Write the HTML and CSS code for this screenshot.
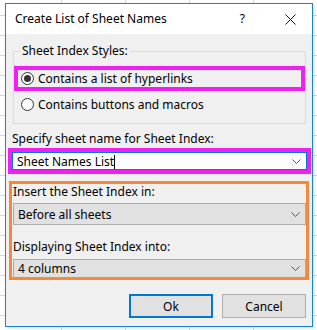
FILE: index.html
```html
<!DOCTYPE html>
<html lang="en">
  <head>
    <meta charset="UTF-8" />
    <meta name="viewport" content="width=device-width, initial-scale=1.0" />
    <title>Create List of Sheet Names</title>
    <link rel="stylesheet" href="styles.css">
  </head>
  <body>
    <div class="dialog">
      <div class="titlebar">
        <span class="title">Create List of Sheet Names</span>
        <span class="help">?</span>
        <svg class="close" width="11" height="11" viewBox="0 0 11 11">
          <path d="M0.5 0.5 L10.5 10.5 M10.5 0.5 L0.5 10.5" stroke="#111" stroke-width="1" fill="none" />
        </svg>
      </div>

      <div class="content">
        <fieldset class="group">
          <legend>Sheet Index Styles:</legend>
          <div class="radio-row mark-pink first">
            <span class="radio checked"></span>
            <span>Contains a list of hyperlinks</span>
          </div>
          <div class="radio-row second">
            <span class="radio"></span>
            <span>Contains buttons and macros</span>
          </div>
        </fieldset>

        <div class="field-label spec">Specify sheet name for Sheet Index:</div>
        <div class="mark-pink name-box">
          <div class="combo editable">
            <span class="value">Sheet Names List<span class="caret"></span></span>
            <svg class="chevron" width="9" height="5" viewBox="0 0 9 5">
              <path d="M0.5 0.5 L4.5 4.5 L8.5 0.5" stroke="#555" fill="none" />
            </svg>
          </div>
        </div>

        <div class="mark-orange">
          <div class="field-label">Insert the Sheet Index in:</div>
          <div class="combo">
            <span class="value">Before all sheets</span>
            <svg class="chevron" width="9" height="5" viewBox="0 0 9 5">
              <path d="M0.5 0.5 L4.5 4.5 L8.5 0.5" stroke="#555" fill="none" />
            </svg>
          </div>
          <div class="field-label second-label">Displaying Sheet Index into:</div>
          <div class="combo last">
            <span class="value">4 columns</span>
            <svg class="chevron" width="9" height="5" viewBox="0 0 9 5">
              <path d="M0.5 0.5 L4.5 4.5 L8.5 0.5" stroke="#555" fill="none" />
            </svg>
          </div>
        </div>

        <div class="buttons">
          <button class="btn default">Ok</button>
          <button class="btn">Cancel</button>
        </div>
      </div>
    </div>
  </body>
</html>
```

FILE: styles.css
```css
html, body {
  margin: 0;
  width: 317px;
  height: 330px;
  overflow: hidden;
}
body {
  font-family: "Noto Sans", "Open Sans", sans-serif;
  font-size: 12px;
  color: #000;
  background-color: #fff;
  background-image:
    linear-gradient(to right, #d8d8d8 1px, transparent 1px),
    linear-gradient(to bottom, #d8d8d8 1px, transparent 1px);
  background-size: 64px 100%, 100% 20px;
  background-position: 61px 0, 0 15px;
}
.dialog {
  box-sizing: border-box;
  margin: 3px 0 0 5px;
  width: 308px;
  height: 324px;
  border: 1px solid #1883d7;
  background: #f0f0f0;
  display: flex;
  flex-direction: column;
  box-shadow: 1px 1px 3px rgba(0, 0, 0, 0.15);
}
.titlebar {
  height: 30px;
  background: #fff;
  display: flex;
  align-items: center;
  padding-left: 9px;
}
.title {
  flex: 1;
  line-height: 16px;
}
.help {
  margin-right: 40px;
  line-height: 16px;
}
.close {
  margin-right: 16px;
}
.content {
  flex: 1;
  display: flex;
  flex-direction: column;
}
.group {
  margin: 9px 6px 0 7px;
  padding: 0 0 9px 0;
  border: 1px solid #dcdcdc;
  min-width: 0;
}
.group legend {
  margin-left: 6px;
  padding: 0 2px;
  line-height: 16px;
}
.radio-row {
  display: flex;
  align-items: center;
  gap: 4px;
}
.radio-row.first {
  margin-top: 7px;
  height: 17px;
  padding-left: 3px;
}
.radio-row.second {
  margin-top: 3px;
  height: 20px;
  padding-left: 7px;
}
.mark-pink {
  border: 4px solid #f020f0;
}
.mark-orange {
  border: 3px solid #f5883a;
}
.radio {
  box-sizing: border-box;
  width: 13px;
  height: 13px;
  border: 1px solid #333;
  border-radius: 50%;
  background: #fff;
  display: flex;
  align-items: center;
  justify-content: center;
}
.radio.checked::after {
  content: "";
  width: 7px;
  height: 7px;
  border-radius: 50%;
  background: #333;
}
.field-label {
  line-height: 16px;
}
.spec {
  margin: 7px 0 0 6px;
}
.name-box {
  margin: 1px 1px 0 2px;
  height: 18px;
  padding: 0;
}
.combo {
  box-sizing: border-box;
  height: 22px;
  border: 1px solid #adadad;
  background: #e1e1e1;
  display: flex;
  align-items: center;
  padding: 0 5px 0 4px;
}
.combo .value {
  flex: 1;
}
.combo.editable {
  height: 18px;
  margin-left: 0;
  border-color: #0078d7;
  background: #fff;
}
.caret {
  display: inline-block;
  width: 1px;
  height: 14px;
  background: #000;
  vertical-align: -3px;
}
.mark-orange {
  margin: 7px 3px 0 3px;
  padding: 0 0 0 1px;
}
.mark-orange .field-label {
  margin-top: 0;
}
.mark-orange .combo {
  margin-top: 3px;
}
.mark-orange .second-label {
  margin-top: 14px;
}
.mark-orange .combo.last {
  margin-top: 4px;
  height: 18px;
  border-bottom: none;
}
.buttons {
  display: flex;
  justify-content: flex-end;
  gap: 9px;
  margin: 14px 6px 0 0;
}
.btn {
  box-sizing: border-box;
  width: 84px;
  height: 24px;
  font-family: inherit;
  font-size: 12px;
  background: #e1e1e1;
  border: 1px solid #adadad;
  padding: 0;
}
.btn.default {
  border: 2px solid #0078d7;
}
```
